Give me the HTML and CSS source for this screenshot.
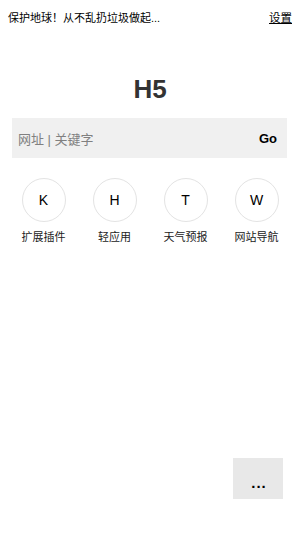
FILE: index.html
```html
<!DOCTYPE html>
<html lang="zh">
<head>
<meta charset="utf-8">
<meta name="viewport" content="width=device-width, initial-scale=1">
<link rel="stylesheet" href="styles.css">
<title>H5</title>
</head>
<body>
<header class="topbar">
  <span class="slogan">保护地球！从不乱扔垃圾做起...</span>
  <a class="settings" href="#">设置</a>
</header>
<main class="main">
  <h1 class="logo">H5</h1>
  <form class="search">
    <span class="placeholder">网址 | 关键字</span>
    <span class="go">Go</span>
  </form>
  <nav class="apps">
    <div class="app"><div class="circle">K</div><div class="label">扩展插件</div></div>
    <div class="app"><div class="circle">H</div><div class="label">轻应用</div></div>
    <div class="app"><div class="circle">T</div><div class="label">天气预报</div></div>
    <div class="app"><div class="circle">W</div><div class="label">网站导航</div></div>
  </nav>
</main>
<button class="more" type="button">...</button>
</body>
</html>
```
FILE: styles.css
```css
* { box-sizing: border-box; }
html, body { margin: 0; padding: 0; background: #fff; }
body {
  width: 300px;
  height: 533px;
  position: relative;
  font-family: "Liberation Sans", "Noto Sans CJK SC", sans-serif;
  color: #000;
  overflow: hidden;
}
.topbar {
  display: flex;
  justify-content: space-between;
  align-items: center;
  padding: 10px 8px 0 8px;
  font-size: 11px;
  line-height: 16px;
}
.settings { color: #000; text-decoration: underline; font-size: 11.5px; }
.main { display: flex; flex-direction: column; align-items: center; }
.logo {
  margin: 48px 0 0 0;
  font-size: 26px;
  line-height: 30px;
  font-weight: bold;
  color: #333;
}
.search {
  margin: 14px 0 0 0;
  width: 275px;
  height: 40px;
  margin-left: -1px;
  background: #f0f0f0;
  display: flex;
  align-items: center;
  justify-content: space-between;
  padding: 0 10px 0 6px;
}
.placeholder { font-size: 13px; color: #808080; }
.go { font-size: 13px; font-weight: bold; color: #000; }
.apps {
  margin-top: 20px;
  width: 284px;
  display: grid;
  grid-template-columns: repeat(4, 1fr);
}
.app { display: flex; flex-direction: column; align-items: center; }
.circle {
  width: 44px;
  height: 44px;
  border: 1px solid #e3e3e3;
  border-radius: 50%;
  display: flex;
  align-items: center;
  justify-content: center;
  font-size: 14px;
  color: #000;
}
.label { margin-top: 8px; font-size: 11px; line-height: 14px; color: #222; }
.more {
  position: absolute;
  left: 233px;
  top: 458px;
  width: 50px;
  height: 41px;
  border: none;
  background: #e8e8e8;
  font-family: "Liberation Sans", sans-serif;
  font-size: 15px;
  font-weight: bold;
  color: #000;
  padding: 8px 0 0 2px;
  letter-spacing: 1px;
}
```
